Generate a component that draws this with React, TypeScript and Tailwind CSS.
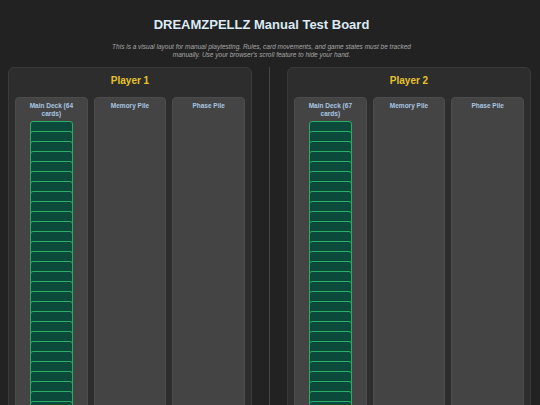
import React from "react";

function Pile({ title, cards }: { title: string; cards?: number }) {
  return (
    <div className="flex flex-col items-center rounded-[4px] border border-[#4c4c4c] bg-[#444444] px-[6px] pt-[4px] pb-[8px]">
      <div className="text-center text-[6.5px] font-bold leading-[8px] text-[#a9c7e3]">{title}</div>
      {cards ? (
        <div className="mt-[3px] flex flex-col items-center">
          {Array.from({ length: cards }).map((_, i) => (
            <div
              key={i}
              className={
                "h-[40px] w-[43px] shrink-0 rounded-[3px] border border-[#2aae66] bg-[#0b4a3a] " +
                (i === 0 ? "" : "-mt-[30px]")
              }
            />
          ))}
        </div>
      ) : null}
    </div>
  );
}

function Player({ name, deck }: { name: string; deck: number }) {
  return (
    <div className="flex-1 rounded-[6px] border border-[#3a3a3a] bg-[#2d2d2d] px-[6px] pt-[6px] pb-[8px]">
      <div className="text-center text-[10px] font-bold leading-[14px] text-[#e6c32a]">{name}</div>
      <div className="mt-[9px] grid grid-cols-3 items-stretch gap-[6px]">
        <Pile title={`Main Deck (${deck} cards)`} cards={deck} />
        <Pile title="Memory Pile" />
        <Pile title="Phase Pile" />
      </div>
    </div>
  );
}

export default function App() {
  return (
    <div
      className="min-h-screen bg-[#222222] pl-[8px] pr-[9px] pt-[17px]"
      style={{ fontFamily: '"Liberation Sans", Arial, sans-serif' }}
    >
      <div className="pr-[16px]">
        <h1 className="text-center text-[13px] font-bold leading-[16px] text-[#dcebf5]">
          DREAMZPELLZ Manual Test Board
        </h1>
        <p className="mx-auto mt-[10px] max-w-[310px] text-center text-[6.5px] italic leading-[8px] text-[#a8a8a8]">
          This is a visual layout for manual playtesting. Rules, card movements, and game states must be tracked
          manually. Use your browser's scroll feature to hide your hand.
        </p>
      </div>
      <div className="mt-[8px] flex items-stretch">
        <Player name="Player 1" deck={64} />
        <div className="mx-[17px] w-[1px] bg-[#444444]" />
        <Player name="Player 2" deck={67} />
      </div>
    </div>
  );
}
